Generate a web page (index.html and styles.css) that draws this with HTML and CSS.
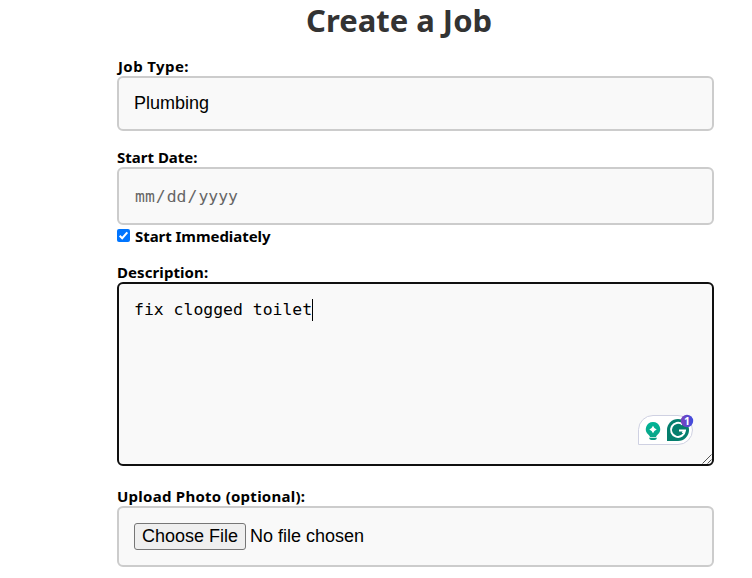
FILE: index.html
```html
<!DOCTYPE html>
<html lang="en">
<head>
<meta charset="utf-8">
<title>Create a Job</title>
<link rel="stylesheet" href="styles.css">
</head>
<body>
<h1 class="title">Create a Job</h1>
<form class="form">
  <div class="label"><span class="l-type">Job Type:</span></div>
  <div class="field select">Plumbing</div>
  <div class="label gap-date"><span>Start Date:</span></div>
  <div class="field date"><span class="part">mm</span>/<span class="part">dd</span>/<span class="part">yyyy</span></div>
  <div class="check">
    <svg class="box" viewBox="0 0 13 13"><rect width="13" height="13" rx="2" fill="#0075ff"/><path d="M2.7 6.7 5.2 9.2 10.3 3.4" fill="none" stroke="#fff" stroke-width="2"/></svg>
    <span class="l-now">Start Immediately</span>
  </div>
  <div class="label gap-desc"><span class="l-desc">Description:</span></div>
  <div class="field area">
    <span class="typed">fix clogged toilet</span><span class="caret"></span>
    <svg class="assistant" width="57" height="32" viewBox="0 0 57 32">
      <defs>
        <linearGradient id="bulb" x2="0" y2="1"><stop stop-color="#00b497"/><stop offset="1" stop-color="#0aa588"/></linearGradient>
        <linearGradient id="badge" x2="1" y2="0"><stop stop-color="#7c42bd"/><stop offset="1" stop-color="#3f4ddf"/></linearGradient>
      </defs>
      <path d="M.5 30.5V15.500A14.500 14.500 0 0 1 15 1.500H40A14.500 14.500 0 0 1 40 30.500Z" fill="#fff" stroke="#cfd1e2"/>
      <path d="M15 8a7.200 7.200 0 0 0-4.500 12.800Q12 22 12 23H18Q18 22 19.500 20.800A7.200 7.200 0 0 0 15 8Z" fill="url(#bulb)"/>
      <path d="M15 11.800 16.400 14.100 18.700 15.500 16.400 16.900 15 19.200 13.600 16.900 11.300 15.500 13.600 14.100Z" fill="#fff"/>
      <path d="M11 23.700H19Q18.500 26 16.500 26H13.500Q11.500 26 11 23.700Z" fill="#079b82"/>
      <path d="M29 27V16A11 11 0 1 1 40 27Z" fill="#047e6d"/>
      <path d="M44.500 10.500A7 7 0 1 0 47 16.500H41M47 16.500 44.500 19.200" fill="none" stroke="#fff" stroke-width="2"/>
      <circle cx="49" cy="7" r="6.200" fill="url(#badge)"/>
      <text x="49" y="10.700" class="count">1</text>
    </svg>
    <svg class="grip" width="10" height="10" viewBox="0 0 10 10"><path d="M.5 9.500 9.500.5M5.500 9.500 9.500 5.500" fill="none" stroke="#555"/></svg>
  </div>
  <div class="label gap-file"><span class="l-file">Upload Photo (optional):</span></div>
  <div class="field file"><span class="choose">Choose File</span><span class="none">No file chosen</span></div>
</form>
</body>
</html>
```
FILE: styles.css
```css
* { box-sizing: border-box; }
body { margin: 0; height: 578px; overflow: hidden; background: #fff; color: #000; font-family: "Noto Sans", "Open Sans", sans-serif; }
.title { margin: 0 0 0 306px; height: 57px; color: #333; font-size: 31px; line-height: 41px; white-space: nowrap; }
.form { width: 597px; margin-left: 117px; }
.label, .check { height: 19px; font-size: 15px; font-weight: 700; line-height: 18px; white-space: nowrap; }
.l-type { margin-left: 1px; letter-spacing: .4px; }
.l-desc { letter-spacing: .08px; }
.l-file { letter-spacing: .26px; }
.l-now { letter-spacing: -.05px; }
.field { position: relative; display: flex; padding: 0 15px; border: 2px solid #ccc; border-radius: 6px; background: #f9f9f9; font: 18px "Liberation Sans", Arial, sans-serif; white-space: pre; }
.select { height: 55px; align-items: center; }
.gap-date { margin-top: 17px; }
.date { height: 58px; align-items: center; color: #666; font: 16.45px "DejaVu Sans Mono", monospace; }
.part { padding: 0 1px; }
.check { display: flex; height: 22px; line-height: 23px; }
.box { width: 13px; height: 13px; margin: 4px 5px 0 0; }
.gap-desc { margin-top: 16px; }
.area { height: 184px; border-color: #101010; padding-top: 15px; font: 16.45px "DejaVu Sans Mono", monospace; }
.typed { line-height: 22px; }
.caret { width: 1px; height: 22px; background: #000; }
.assistant { position: absolute; left: 519px; top: 130px; }
.grip { position: absolute; right: 0; bottom: 0; }
.count { fill: #fff; font: 700 10.5px "Noto Sans", sans-serif; text-anchor: middle; }
.gap-file { margin-top: 21px; }
.file { height: 61px; align-items: center; }
.choose { height: 27px; width: 112px; border: 1px solid #767676; border-radius: 3px; background: #efefef; line-height: 24px; text-align: center; }
.none { margin: -2px 0 0 4px; line-height: 24px; }
```
